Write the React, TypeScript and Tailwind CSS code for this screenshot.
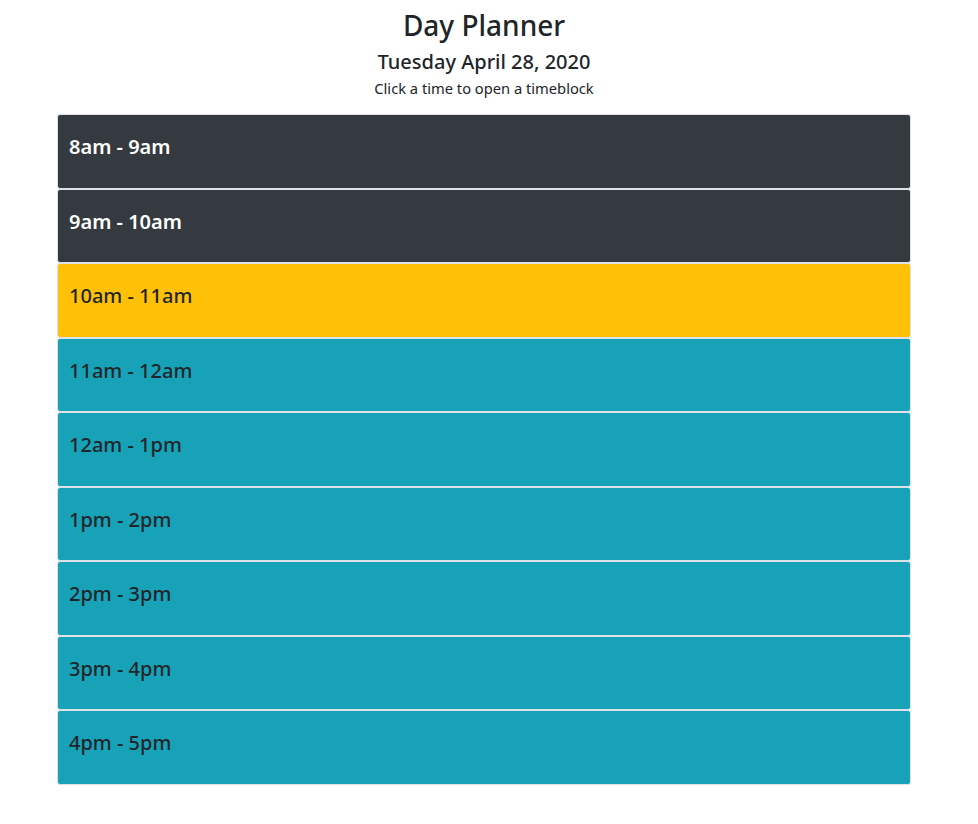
import React from 'react';

const App = () => {
  // Time blocks with their state: past, present, future
  const blocks = [
    { label: '8am - 9am', state: 'past' },
    { label: '9am - 10am', state: 'past' },
    { label: '10am - 11am', state: 'present' },
    { label: '11am - 12am', state: 'future' },
    { label: '12am - 1pm', state: 'future' },
    { label: '1pm - 2pm', state: 'future' },
    { label: '2pm - 3pm', state: 'future' },
    { label: '3pm - 4pm', state: 'future' },
    { label: '4pm - 5pm', state: 'future' },
  ];

  const blockStyle = (state: string) => {
    switch (state) {
      case 'past':
        return 'bg-[#343a40] text-white font-semibold';
      case 'present':
        return 'bg-[#ffc107] text-[#212529] font-medium';
      default:
        return 'bg-[#17a2b8] text-[#212529] font-medium';
    }
  };

  return (
    <div className="min-h-screen bg-white text-[#212529] font-['Noto_Sans','Open_Sans',sans-serif]">
      <div className="w-[968px]">
        <header className="flex flex-col items-center pt-[5px]">
          <h1 className="text-[28px] leading-[40px] font-medium">Day Planner</h1>
          <h2 className="text-[20px] leading-[28px] font-medium mt-[3px]">Tuesday April 28, 2020</h2>
          <p className="text-[14.7px] leading-[20px] mt-[2px]">Click a time to open a timeblock</p>
        </header>

        <div className="w-[854px] ml-[57px] mt-[16px] flex flex-col">
          {blocks.map((block, index) => (
            <button
              key={index}
              className={`h-[74.5px] border border-[#dee2e6] rounded-[3px] text-left pl-[11px] pt-[18px] flex items-start ${blockStyle(block.state)}`}
            >
              <span className="text-[20px] leading-[28px]">{block.label}</span>
            </button>
          ))}
        </div>
      </div>
    </div>
  );
};

export default App;
